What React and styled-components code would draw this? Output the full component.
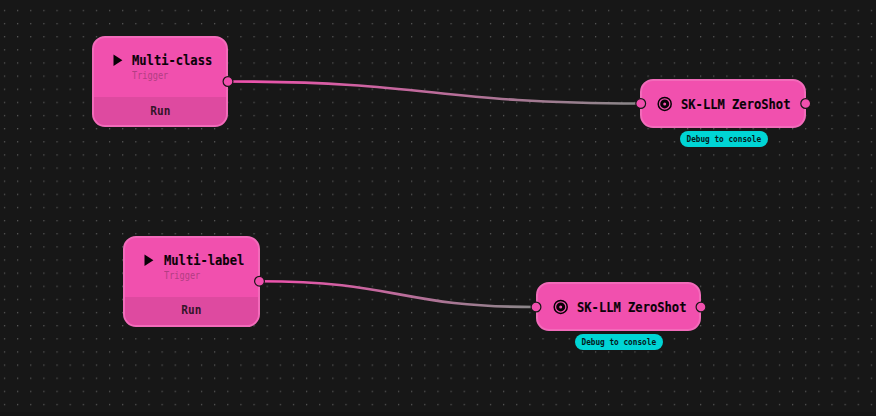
import React from 'react';
import styled, { createGlobalStyle } from 'styled-components';

const GlobalStyle = createGlobalStyle`
  * { box-sizing: border-box; }
  html, body { margin: 0; background: #171717; overflow: hidden; }
`;

const Canvas = styled.main`
  position: relative;
  width: 876px;
  height: 416px;
  overflow: hidden;
  background: #171717;
  border-bottom: 4px solid #151515;
  font-family: "DejaVu Sans Mono", "Liberation Mono", monospace;
`;

const Layer = styled.svg`
  position: absolute;
  inset: 0;
  display: block;
`;

const Node = styled.article`
  position: absolute;
  left: ${(p) => p.$x}px;
  top: ${(p) => p.$y}px;
  width: ${(p) => p.$w}px;
  height: ${(p) => p.$h}px;
  display: flex;
  flex-direction: column;
  border: 2px solid #f26bba;
  border-radius: 13px;
  background: #f150ae;
`;

const Header = styled.div`
  flex: 1;
  display: flex;
  align-items: ${(p) => (p.$top ? 'flex-start' : 'center')};
  padding: ${(p) => (p.$top ? '13px 0 0 19px' : '0 0 0 15px')};
`;

const IconBox = styled.span`
  display: flex;
  flex: none;
  width: ${(p) => p.$w}px;
  height: 18px;
  align-items: center;
`;

const Labels = styled.div`
  display: flex;
  flex-direction: column;
`;

const Narrow = styled.span`
  display: block;
  white-space: pre;
  transform: scaleX(${(p) => p.$scale});
  transform-origin: ${(p) => p.$origin || 'left'} center;
`;

const Title = styled(Narrow)`
  font-size: 14.4px;
  font-weight: 700;
  line-height: 18px;
  color: #0a0207;
  -webkit-text-stroke: 0.15px #0a0207;
`;

const Subtitle = styled(Narrow)`
  font-size: 10px;
  line-height: 13px;
  color: #b23e83;
`;

const RunButton = styled.button`
  display: flex;
  align-items: center;
  justify-content: center;
  height: 28px;
  padding: 0 0 2px;
  border: 0;
  border-radius: 0 0 11px 11px;
  background: #de4aa0;
  color: #35152a;
  font: 700 12.5px "DejaVu Sans Mono", monospace;
`;

const Badge = styled.div`
  position: absolute;
  left: ${(p) => p.$x}px;
  top: ${(p) => p.$y}px;
  width: 88px;
  height: 16px;
  display: flex;
  align-items: center;
  justify-content: center;
  border-radius: 8px;
  background: #00d5d5;
  color: #04191b;
  font-size: 9.5px;
  font-weight: 700;
  line-height: 14px;
`;

const PlayIcon = () => (
  <svg width="10" height="12" viewBox="0 0 10 12">
    <path d="M0.5 0.5 L9.4 6.2 L0.5 12 Z" fill="#080206" />
  </svg>
);

const TargetIcon = () => (
  <svg width="16" height="16" viewBox="0 0 16 16" fill="none" stroke="#080206">
    <circle cx="7.7" cy="7.9" r="6.5" strokeWidth="1.5" />
    <circle cx="7.7" cy="7.9" r="3" strokeWidth="3" />
  </svg>
);

const TriggerNode = ({ x, y, title }) => (
  <Node $x={x} $y={y} $w={136.6} $h={91}>
    <Header $top>
      <IconBox $w={19.5}><PlayIcon /></IconBox>
      <Labels>
        <Title $scale={0.842}>{title}</Title>
        <Subtitle $scale={0.86}>Trigger</Subtitle>
      </Labels>
    </Header>
    <RunButton><Narrow $scale={0.888} $origin="center">Run</Narrow></RunButton>
  </Node>
);

const ModelNode = ({ x, y }) => (
  <>
    <Node $x={x} $y={y} $w={165.6} $h={49}>
      <Header>
        <IconBox $w={24}><TargetIcon /></IconBox>
        <Title $scale={0.842}>SK-LLM ZeroShot</Title>
      </Header>
    </Node>
    <Badge $x={x + 39.4} $y={y + 52}>
      <Narrow $scale={0.815} $origin="center">Debug to console</Narrow>
    </Badge>
  </>
);

const ports = [[228, 81.5], [640.7, 103.5], [805.7, 103.5], [259.5, 281.2], [536, 307], [701, 307]];

const App = () => (
  <>
    <GlobalStyle />
    <Canvas>
      <Layer width="876" height="416">
        <defs>
          <pattern id="dots" x="3.9" y="9.8" width="13.135" height="13.135" patternUnits="userSpaceOnUse">
            <circle cx="0.65" cy="0.65" r="0.65" fill="#666" />
          </pattern>
          <linearGradient id="edgeA" gradientUnits="userSpaceOnUse" x1="228" x2="640" y1="0" y2="0">
            <stop stopColor="#f150ae" /><stop offset="1" stopColor="#888" />
          </linearGradient>
          <linearGradient id="edgeB" gradientUnits="userSpaceOnUse" x1="259" x2="536" y1="0" y2="0">
            <stop stopColor="#f150ae" /><stop offset="1" stopColor="#888" />
          </linearGradient>
        </defs>
        <rect width="876" height="412" fill="url(#dots)" />
        <g fill="none" strokeWidth="2.6">
          <path d="M228 81.5 C434 81.5 434 103.5 640 103.5" stroke="url(#edgeA)" />
          <path d="M259.5 281.2 C398 281.2 398 307 536 307" stroke="url(#edgeB)" />
        </g>
      </Layer>
      <TriggerNode x={91.6} y={36.2} title="Multi-class" />
      <TriggerNode x={123} y={235.6} title="Multi-label" />
      <ModelNode x={640.4} y={79} />
      <ModelNode x={535.8} y={282.4} />
      <Layer width="876" height="416">
        {ports.map(([x, y]) => (
          <circle key={`${x}-${y}`} cx={x} cy={y} r="4.9" fill="#f150ae" stroke="#171717" strokeWidth="1.2" />
        ))}
      </Layer>
    </Canvas>
  </>
);

export default App;
